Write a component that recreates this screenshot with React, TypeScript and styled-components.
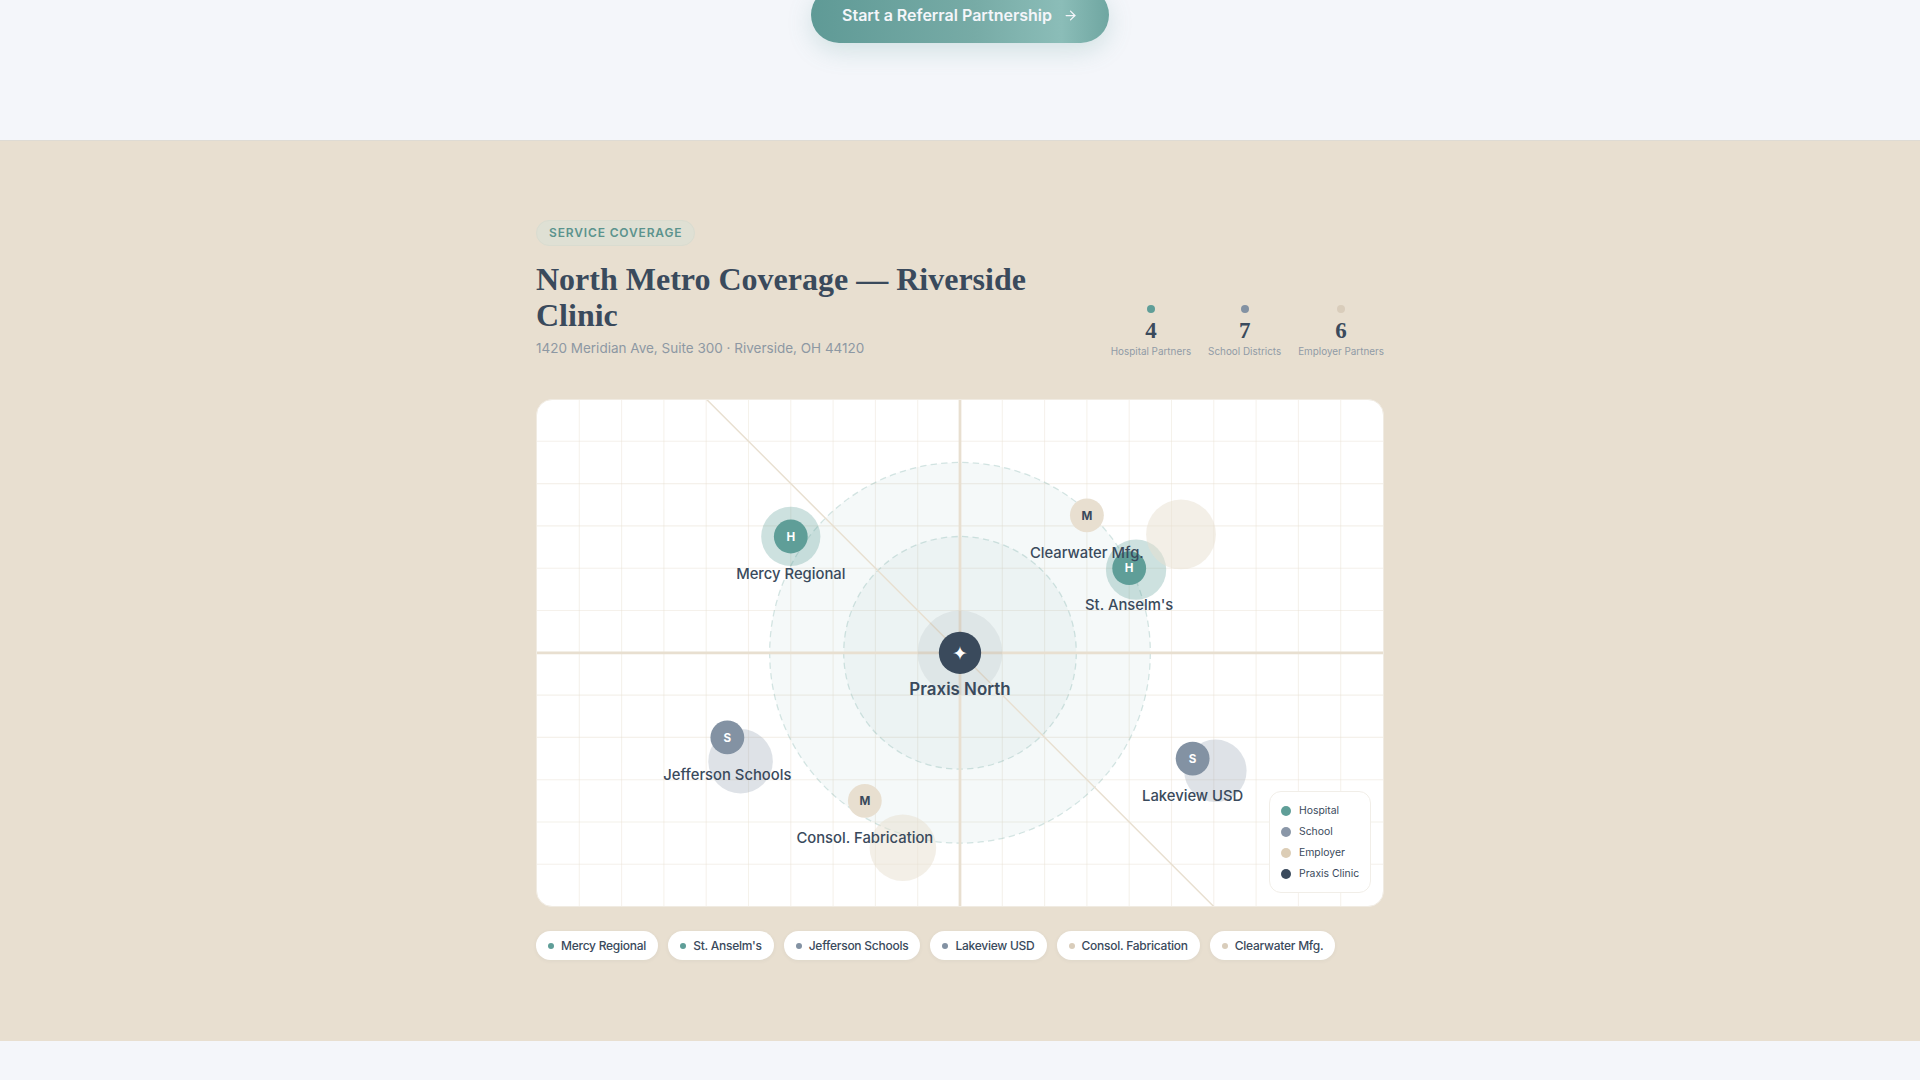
import React from "react";
import styled, { createGlobalStyle } from "styled-components";
import { ArrowRight } from "lucide-react";

const INK = "#3a4a5c";
const TEAL = "#5f9e98";
const SLATE = "#8392a3";
const SAND = "#e8dfd0";
const SANS = `"Inter", "Noto Sans", sans-serif`;
const SERIF = `"Liberation Serif", serif`;

const Global = createGlobalStyle`
  html, body { margin: 0; padding: 0; background: #f4f6fa; }
  body { font-family: ${SANS}; color: ${INK}; overflow: hidden; }
`;

const Page = styled.div`
  height: 1080px;
  display: flex;
  flex-direction: column;
  overflow: hidden;
`;

const Cta = styled.div`
  height: 140px;
  flex: none;
  display: flex;
  justify-content: center;
  align-items: flex-end;
  padding-bottom: 97px;
  box-sizing: border-box;
`;

const CtaButton = styled.a`
  flex: none;
  width: 298px;
  height: 56px;
  box-sizing: border-box;
  display: flex;
  align-items: center;
  justify-content: center;
  gap: 11px;
  border-radius: 28px;
  background: linear-gradient(90deg, #5f9a96 0%, #77aba6 55%, #8bbdb8 84%, #6fa6a1 100%);
  box-shadow: 0 8px 24px rgba(91, 154, 148, 0.22);
  color: #f4f6fa;
  font-size: 16px;
  font-weight: 600;
`;

const Section = styled.section`
  flex: none;
  height: 901px;
  box-sizing: border-box;
  background: ${SAND};
  border-top: 1px solid #dedbd4;
  padding-top: 79px;
  display: flex;
  justify-content: center;
`;

const Inner = styled.div`
  width: 848px;
`;

const Tag = styled.span`
  display: inline-flex;
  align-items: center;
  height: 26px;
  box-sizing: border-box;
  padding: 0 12px 1px;
  border-radius: 13px;
  background: #dfe0d4;
  border: 1px solid #d9dcd0;
  color: #5b938d;
  font-size: 12px;
  font-weight: 600;
  letter-spacing: 0.85px;
  text-transform: uppercase;
`;

const Header = styled.div`
  display: flex;
  justify-content: space-between;
  align-items: flex-end;
  margin-top: 15px;
`;

const TitleBlock = styled.div`
  width: 510px;
`;

const Title = styled.h2`
  margin: 0;
  font-family: ${SERIF};
  font-size: 32px;
  line-height: 36px;
  font-weight: 700;
  color: ${INK};
`;

const Address = styled.div`
  margin-top: 5px;
  font-size: 13.5px;
  line-height: 20px;
  color: #8d98a3;
`;

const Stats = styled.div`
  display: flex;
  gap: 17px;
`;

const Stat = styled.div`
  display: flex;
  flex-direction: column;
  align-items: center;
`;

const StatDot = styled.span<{ $c: string }>`
  width: 8px;
  height: 8px;
  border-radius: 50%;
  background: ${(p) => p.$c};
`;

const StatValue = styled.div`
  margin-top: 5px;
  font-family: ${SERIF};
  font-size: 23px;
  line-height: 26px;
  font-weight: 700;
  color: ${INK};
`;

const StatLabel = styled.div`
  font-size: 9.9px;
  line-height: 14px;
  color: #909ba6;
  white-space: nowrap;
`;

const MapCard = styled.div`
  position: relative;
  margin-top: 41px;
  height: 508px;
  box-sizing: border-box;
  background: #fff;
  border: 1px solid #f0ebe2;
  border-radius: 16px;
  overflow: hidden;
`;

const MapSvg = styled.svg`
  display: block;
  width: 846px;
  height: 507.6px;
  margin-top: -1px;
`;

const GridLine = styled.line`
  stroke: ${SAND};
  stroke-width: 1;
  opacity: 0.42;
`;

const Axis = styled.line`
  stroke: ${SAND};
  stroke-width: 2.6;
`;

const Diagonal = styled.line`
  stroke: ${SAND};
  stroke-width: 1.4;
`;

const Ring = styled.circle<{ $f: number }>`
  fill: rgba(91, 154, 148, ${(p) => p.$f});
  stroke: rgba(91, 154, 148, 0.25);
  stroke-width: 1.2;
  stroke-dasharray: 6 4;
`;

const Halo = styled.circle<{ $c: string }>`
  fill: ${(p) => p.$c};
`;

const Dot = styled.circle<{ $c: string }>`
  fill: ${(p) => p.$c};
`;

const Initial = styled.text<{ $c: string }>`
  fill: ${(p) => p.$c};
  font-family: ${SANS};
  font-size: 11px;
  font-weight: 700;
  text-anchor: middle;
`;

const Star = styled.text`
  fill: #fff;
  font-family: "DejaVu Sans", sans-serif;
  font-size: 18px;
  text-anchor: middle;
`;

const NodeLabel = styled.text<{ $big?: boolean }>`
  fill: ${INK};
  font-family: ${SANS};
  font-size: ${(p) => (p.$big ? "16px" : "14px")};
  font-weight: ${(p) => (p.$big ? 600 : 500)};
  text-anchor: middle;
`;

const Legend = styled.div`
  position: absolute;
  right: 12px;
  bottom: 13px;
  width: 102px;
  box-sizing: border-box;
  padding: 12px 11px;
  display: flex;
  flex-direction: column;
  gap: 8px;
  background: #fff;
  border: 1px solid #f1eee8;
  border-radius: 12px;
`;

const LegendRow = styled.div`
  display: flex;
  align-items: center;
  gap: 8px;
  height: 13px;
  font-size: 10.4px;
  color: ${INK};
  white-space: nowrap;
`;

const LegendDot = styled.span<{ $c: string }>`
  flex: none;
  width: 10px;
  height: 10px;
  border-radius: 50%;
  background: ${(p) => p.$c};
`;

const Chips = styled.div`
  display: flex;
  gap: 10px;
  margin-top: 24px;
`;

const Chip = styled.div`
  display: flex;
  align-items: center;
  gap: 7px;
  height: 29px;
  box-sizing: border-box;
  padding: 0 12px 0 12px;
  background: #fff;
  border-radius: 15px;
  box-shadow: 0 1px 4px rgba(58, 74, 92, 0.06);
  font-size: 12px;
  font-weight: 500;
  letter-spacing: -0.25px;
  color: ${INK};
  white-space: nowrap;
`;

const ChipDot = styled.span<{ $c: string }>`
  flex: none;
  width: 6px;
  height: 6px;
  border-radius: 50%;
  background: ${(p) => p.$c};
`;

const HALO_T = "rgba(91,154,148,0.3)";
const HALO_S = "rgba(125,141,160,0.25)";
const HALO_M = "rgba(232,223,208,0.5)";

const nodes = [
  { n: "Mercy Regional", l: "H", x: 240, y: 130, hx: 240, hy: 130, hr: 28, c: TEAL, h: HALO_T, t: "#fff", ch: TEAL },
  { n: "St. Anselm's", l: "H", x: 560, y: 160, hx: 566.5, hy: 161.4, hr: 28.5, c: TEAL, h: HALO_T, t: "#fff", ch: TEAL },
  { n: "Jefferson Schools", l: "S", x: 180, y: 320, hx: 192.5, hy: 342.5, hr: 30.5, c: SLATE, h: HALO_S, t: "#fff", ch: SLATE },
  { n: "Lakeview USD", l: "S", x: 620, y: 340, hx: 641.5, hy: 351.6, hr: 29.5, c: SLATE, h: HALO_S, t: "#fff", ch: SLATE },
  { n: "Consol. Fabrication", l: "M", x: 310, y: 380, hx: 346, hy: 424.4, hr: 31.5, c: SAND, h: HALO_M, t: INK, ch: "#d9cdbb" },
  { n: "Clearwater Mfg.", l: "M", x: 520, y: 110, hx: 609, hy: 128.1, hr: 33, c: SAND, h: HALO_M, t: INK, ch: "#d9cdbb" },
];

const verticals = Array.from({ length: 19 }, (_, i) => (i + 1) * 40);
const horizontals = Array.from({ length: 11 }, (_, i) => (i + 1) * 40);

const stats = [
  { c: TEAL, v: "4", l: "Hospital Partners" },
  { c: SLATE, v: "7", l: "School Districts" },
  { c: "#d9cdbb", v: "6", l: "Employer Partners" },
];

const legend = [
  { c: TEAL, l: "Hospital" },
  { c: "#8a97a8", l: "School" },
  { c: "#dccdb6", l: "Employer" },
  { c: INK, l: "Praxis Clinic" },
];

export default function App() {
  return (
    <Page>
      <Global />
      <Cta>
        <CtaButton>
          Start a Referral Partnership
          <ArrowRight size={15} strokeWidth={2} />
        </CtaButton>
      </Cta>
      <Section>
        <Inner>
          <Tag>Service Coverage</Tag>
          <Header>
            <TitleBlock>
              <Title>North Metro Coverage — Riverside Clinic</Title>
              <Address>1420 Meridian Ave, Suite 300 · Riverside, OH 44120</Address>
            </TitleBlock>
            <Stats>
              {stats.map((s) => (
                <Stat key={s.l}>
                  <StatDot $c={s.c} />
                  <StatValue>{s.v}</StatValue>
                  <StatLabel>{s.l}</StatLabel>
                </Stat>
              ))}
            </Stats>
          </Header>
          <MapCard>
            <MapSvg viewBox="0 0 800 480" preserveAspectRatio="none">
              {verticals.map((x) => (
                <GridLine key={x} x1={x} x2={x} y1={0} y2={480} />
              ))}
              {horizontals.map((y) => (
                <GridLine key={y} x1={0} x2={800} y1={y} y2={y} />
              ))}
              <Ring cx={400} cy={240} r={180} $f={0.06} />
              <Ring cx={400} cy={240} r={110} $f={0.055} />
              <Axis x1={400} x2={400} y1={0} y2={480} />
              <Axis x1={0} x2={800} y1={240} y2={240} />
              <Diagonal x1={160} y1={0} x2={640} y2={480} />
              <Halo cx={400} cy={240} r={40} $c="rgba(58,74,92,0.08)" />
              <Dot cx={400} cy={240} r={20} $c={INK} />
              <Star x={400} y={246.5}>✦</Star>
              <NodeLabel $big x={400} y={280}>Praxis North</NodeLabel>
              {nodes.map((n) => (
                <g key={n.n}>
                  <Halo cx={n.hx} cy={n.hy} r={n.hr} $c={n.h} />
                  <Dot cx={n.x} cy={n.y} r={16} $c={n.c} />
                  <Initial x={n.x} y={n.y + 4} $c={n.t}>{n.l}</Initial>
                  <NodeLabel x={n.x} y={n.y + 40}>{n.n}</NodeLabel>
                </g>
              ))}
            </MapSvg>
            <Legend>
              {legend.map((l) => (
                <LegendRow key={l.l}>
                  <LegendDot $c={l.c} />
                  {l.l}
                </LegendRow>
              ))}
            </Legend>
          </MapCard>
          <Chips>
            {nodes.map((n) => (
              <Chip key={n.n}>
                <ChipDot $c={n.ch} />
                {n.n}
              </Chip>
            ))}
          </Chips>
        </Inner>
      </Section>
    </Page>
  );
}
